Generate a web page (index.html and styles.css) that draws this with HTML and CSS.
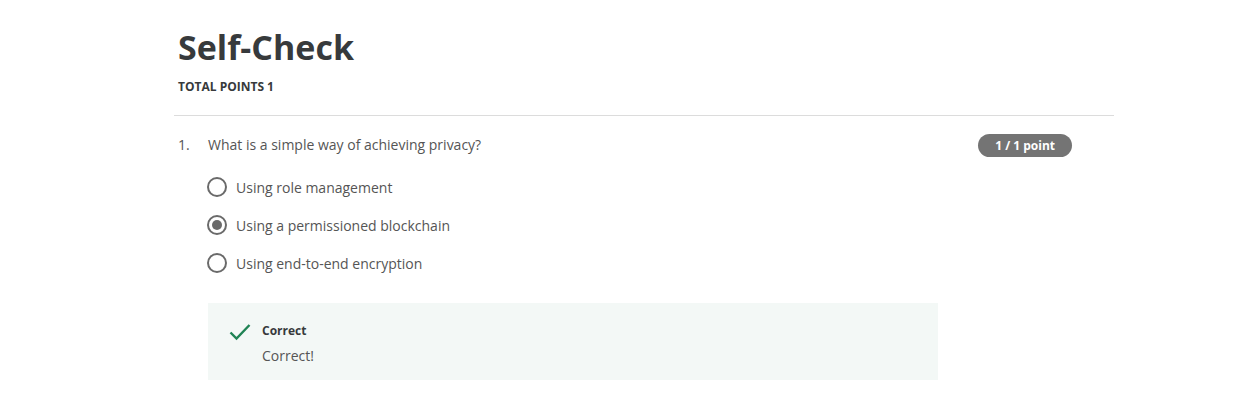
FILE: index.html
```html
<!DOCTYPE html>
<html>
<head>
<meta charset="utf-8">
<link rel="stylesheet" href="styles.css">
</head>
<body>
<div class="page">
  <header class="header">
    <h1 class="title">Self-Check</h1>
    <div class="total">TOTAL POINTS 1</div>
  </header>
  <div class="question">
    <div class="q-row">
      <span class="q-num">1.</span>
      <span class="q-text">What is a simple way of achieving privacy?</span>
      <span class="badge">1 / 1 point</span>
    </div>
    <div class="options">
      <div class="option"><span class="radio"></span><span>Using role management</span></div>
      <div class="option"><span class="radio checked"></span><span>Using a permissioned blockchain</span></div>
      <div class="option"><span class="radio"></span><span>Using end-to-end encryption</span></div>
    </div>
    <div class="feedback">
      <svg class="check" width="22" height="18" viewBox="0 0 22 18"><path d="M1.5 9.5 L7.5 15.5 L20.5 2" fill="none" stroke="#1f8354" stroke-width="2.4"/></svg>
      <div class="fb-body">
        <div class="fb-title">Correct</div>
        <div class="fb-text">Correct!</div>
      </div>
    </div>
  </div>
</div>
</body>
</html>
```
FILE: styles.css
```css
* { box-sizing: border-box; }
body {
  margin: 0;
  background: #fff;
  font-family: "Open Sans", "Liberation Sans", sans-serif;
  color: #373a3c;
}
.page {
  margin-left: 174px;
  width: 940px;
}
.header {
  padding: 24px 0 20px 4px;
  border-bottom: 1px solid #dcdcdc;
}
.title {
  margin: 0;
  font-size: 34px;
  font-weight: 700;
  line-height: 46px;
  color: #373a3c;
}
.total {
  margin-top: 9px;
  font-size: 12px;
  font-weight: 700;
  line-height: 16px;
  color: #373a3c;
}
.question {
  padding: 16px 0 0 4px;
}
.q-row {
  display: flex;
  align-items: center;
  height: 24px;
  font-size: 14px;
  color: #555;
}
.q-num {
  width: 30px;
}
.q-text {
  flex: 1;
}
.badge {
  background: #747474;
  color: #fff;
  font-size: 12px;
  font-weight: 700;
  height: 23px;
  line-height: 23px;
  padding: 0 17px;
  border-radius: 12px;
  margin-right: 42px;
  position: relative;
  top: 1px;
}
.options {
  padding: 21px 0 0 29px;
  display: flex;
  flex-direction: column;
  gap: 18px;
}
.option {
  display: flex;
  align-items: center;
  gap: 9px;
  height: 20px;
  font-size: 14px;
  color: #555;
}
.radio {
  width: 20px;
  height: 20px;
  border: 2px solid #6a6a6a;
  border-radius: 50%;
  display: flex;
  align-items: center;
  justify-content: center;
}
.radio.checked::after {
  content: "";
  width: 10px;
  height: 10px;
  border-radius: 50%;
  background: #6a6a6a;
}
.feedback {
  margin: 30px 0 0 30px;
  width: 730px;
  background: #f3f8f6;
  padding: 20px 20px 14px 21px;
  display: flex;
  gap: 11px;
}
.check {
  display: block;
  margin-top: 0;
}
.fb-title {
  font-size: 12px;
  font-weight: 700;
  line-height: 16px;
  color: #373a3c;
}
.fb-text {
  margin-top: 7px;
  font-size: 14px;
  line-height: 20px;
  color: #555;
}
```
